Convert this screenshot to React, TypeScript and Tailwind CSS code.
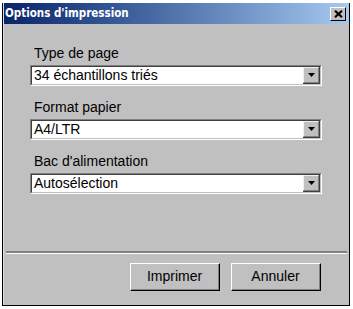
import React from "react";

const bodyFont = { fontFamily: '"Liberation Sans", Arial, sans-serif' };

function Select({ value }: { value: string }) {
  return (
    <div className="w-[292px] h-[21px] border-t border-l border-[#808080] border-r border-b border-r-white border-b-white">
      <div className="h-full flex border-t border-l border-[#404040] border-r border-b border-r-[#c0c0c0] border-b-[#c0c0c0] bg-white">
        <div className="flex-1 pl-[2px] text-[14px] leading-[17px] text-black" style={bodyFont}>
          {value}
        </div>
        <div className="w-[17px] h-full border-r border-b border-[#404040]">
          <div className="h-full bg-[#c0c0c0] border-t border-l border-t-[#f0f0f0] border-l-[#f0f0f0] border-r border-b border-[#808080] flex items-center justify-center">
            <svg width="7" height="4" viewBox="0 0 7 4">
              <path d="M0 0 H7 L3.5 4 Z" fill="#000" />
            </svg>
          </div>
        </div>
      </div>
    </div>
  );
}

function Field({ label, value }: { label: string; value: string }) {
  return (
    <div className="flex flex-col">
      <div className="pl-[4px] text-[14px] leading-[16px] text-black h-[20px]" style={bodyFont}>
        {label}
      </div>
      <Select value={value} />
    </div>
  );
}

function Button({ children }: { children: React.ReactNode }) {
  return (
    <div className="w-[90px] h-[28px] border-t border-l border-white border-r border-b border-r-black border-b-black">
      <div className="h-full flex items-center justify-center border-r border-b border-[#808080] text-[14px] text-black" style={bodyFont}>
        {children}
      </div>
    </div>
  );
}

export default function App() {
  return (
    <div className="w-[353px] h-[309px] bg-white">
      <div className="ml-[2px] pt-[3px]">
        <div className="w-[348px] h-[303px] bg-[#c0c0c0] border-l border-r border-b border-black flex flex-col">
          <div className="h-[21px] border-l border-[#e0e0e0] flex items-center justify-between pl-[1px] pr-[3px] bg-gradient-to-r from-[#0a246a] to-[#a6caf0]">
            <span
              className="text-white font-bold text-[11.5px]"
              style={{ fontFamily: '"DejaVu Sans Condensed", "DejaVu Sans", sans-serif' }}
            >
              Options d'impression
            </span>
            <div className="w-[16px] h-[14px] bg-[#c0c0c0] border-t border-l border-white border-r border-b border-r-black border-b-black flex items-center justify-center">
              <svg width="9" height="8" viewBox="0 0 9 8">
                <path d="M1 0.8 L8 7.2 M8 0.8 L1 7.2" stroke="#000" strokeWidth="2.2" />
              </svg>
            </div>
          </div>
          <div className="flex-1 flex flex-col border-l border-[#e0e0e0]">
            <div className="flex-1 flex flex-col gap-[13px] pl-[26px] pt-[21px]">
              <Field label="Type de page" value="34 échantillons triés" />
              <Field label="Format papier" value="A4/LTR" />
              <Field label="Bac d'alimentation" value="Autosélection" />
            </div>
            <div className="ml-[2px] mr-[2px] border-t-2 border-[#808080]" />
            <div className="ml-[2px] mr-[2px] border-t border-white" />
            <div className="h-[51px] flex items-start justify-end gap-[11px] pt-[9px] pr-[28px]">
              <Button>Imprimer</Button>
              <Button>Annuler</Button>
            </div>
          </div>
        </div>
      </div>
    </div>
  );
}
